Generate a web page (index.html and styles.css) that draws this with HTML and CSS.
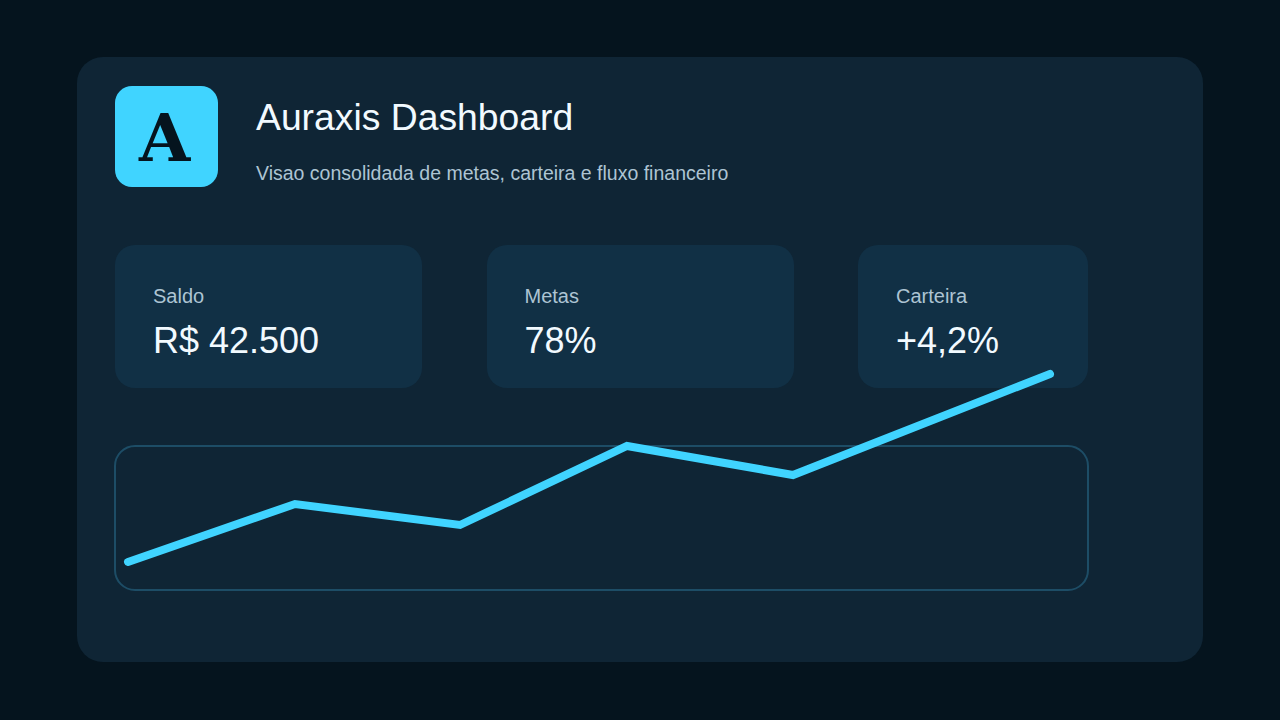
FILE: index.html
```html
<!DOCTYPE html>
<html lang="pt">
<head>
<meta charset="utf-8">
<title>Auraxis Dashboard</title>
<link rel="stylesheet" href="styles.css">
</head>
<body>
<main class="panel">
  <header class="header">
    <div class="logo">A</div>
    <div class="heading">
      <h1 class="title">Auraxis Dashboard</h1>
      <p class="subtitle">Visao consolidada de metas, carteira e fluxo financeiro</p>
    </div>
  </header>
  <section class="stats">
    <div class="card card-wide"><div class="label">Saldo</div><div class="value">R$ 42.500</div></div>
    <div class="card card-wide"><div class="label">Metas</div><div class="value">78%</div></div>
    <div class="card card-narrow"><div class="label">Carteira</div><div class="value">+4,2%</div></div>
  </section>
  <section class="chart"></section>
  <svg class="line" width="1126" height="605" viewBox="0 0 1126 605" aria-hidden="true">
    <polyline points="51,505 218,447 383,468 550,389 716,418 973,317" fill="none" stroke="#40d4ff" stroke-width="8" stroke-linecap="round" stroke-linejoin="miter"/>
  </svg>
</main>
</body>
</html>
```
FILE: styles.css
```css
* { box-sizing: border-box; }
html, body { margin: 0; height: 100%; }
body {
  width: 1280px;
  height: 720px;
  overflow: hidden;
  background: #05141e;
  padding: 57px 77px 58px;
  font-family: "Liberation Sans", Arial, sans-serif;
}
.panel {
  position: relative;
  width: 1126px;
  height: 605px;
  background: #0f2535;
  border-radius: 26px;
  padding: 29px 38px;
}
.header { display: flex; gap: 38px; height: 101px; }
.logo {
  width: 103px;
  height: 101px;
  background: #40d4ff;
  border-radius: 17px;
  color: #05141e;
  font-family: "DejaVu Serif", serif;
  font-weight: 700;
  font-size: 66px;
  line-height: 104px;
  text-align: center;
  padding-right: 4px;
}
.heading { padding-top: 9px; }
.title {
  margin: 0;
  color: #f2faff;
  font-size: 37.3px;
  font-weight: 400;
  line-height: 44px;
}
.subtitle {
  margin: 22px 0 0;
  color: #adc4d3;
  font-size: 19.5px;
  line-height: 24px;
}
.stats { display: flex; gap: 64.5px; margin-top: 58px; width: 973px; }
.card {
  height: 143px;
  background: #113045;
  border-radius: 20px;
  padding: 38px 38px 0;
}
.card-wide { width: 307px; flex: none; }
.card-narrow { flex: 1; }
.label { color: #adc4d3; font-size: 20px; line-height: 26px; }
.value { color: #f2faff; font-size: 36px; line-height: 42px; margin-top: 11px; }
.chart {
  margin: 57px 0 0 -1px;
  width: 975px;
  height: 146px;
  border: 2px solid #1d4d66;
  border-radius: 21px;
}
.line { position: absolute; left: 0; top: 0; }
```
